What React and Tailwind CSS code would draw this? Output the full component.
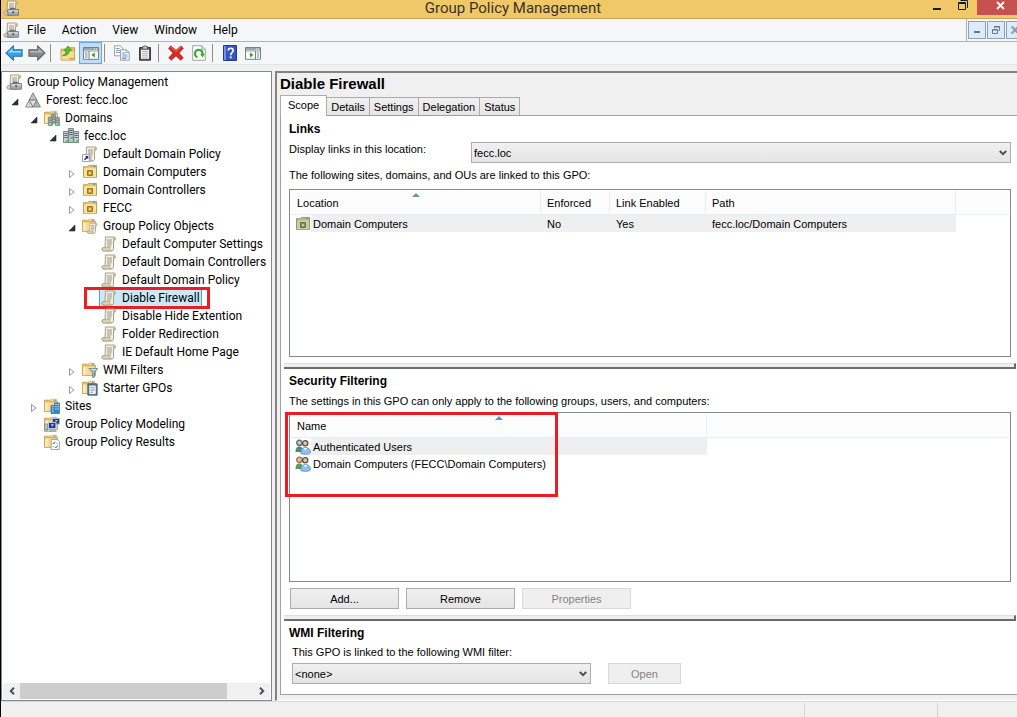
import {useState} from 'react'

const tree = [
	{ id: 'root', depth: 0, label: 'Group Policy Management', icon: ConsoleIcon },
	{ id: 'forest', depth: 1, label: 'Forest: fecc.loc', icon: ForestIcon, toggle: 'open' },
	{ id: 'domains', depth: 2, label: 'Domains', icon: DomainsIcon, toggle: 'open' },
	{ id: 'fecc', depth: 3, label: 'fecc.loc', icon: DomainIcon, toggle: 'open' },
	{ id: 'link', depth: 4, label: 'Default Domain Policy', icon: PolicyLinkIcon },
	{ id: 'ou1', depth: 4, label: 'Domain Computers', icon: OuIcon, toggle: 'closed' },
	{ id: 'ou2', depth: 4, label: 'Domain Controllers', icon: OuIcon, toggle: 'closed' },
	{ id: 'ou3', depth: 4, label: 'FECC', icon: OuIcon, toggle: 'closed' },
	{ id: 'gpos', depth: 4, label: 'Group Policy Objects', icon: GpoFolderIcon, toggle: 'open' },
	{ id: 'gpo1', depth: 5, label: 'Default Computer Settings', icon: PolicyIcon },
	{ id: 'gpo2', depth: 5, label: 'Default Domain Controllers', icon: PolicyIcon },
	{ id: 'gpo3', depth: 5, label: 'Default Domain Policy', icon: PolicyIcon },
	{ id: 'gpo4', depth: 5, label: 'Diable Firewall', icon: PolicyIcon, marked: true },
	{ id: 'gpo5', depth: 5, label: 'Disable Hide Extention', icon: PolicyIcon },
	{ id: 'gpo6', depth: 5, label: 'Folder Redirection', icon: PolicyIcon },
	{ id: 'gpo7', depth: 5, label: 'IE Default Home Page', icon: PolicyIcon },
	{ id: 'wmi', depth: 4, label: 'WMI Filters', icon: WmiFolderIcon, toggle: 'closed' },
	{ id: 'starter', depth: 4, label: 'Starter GPOs', icon: StarterFolderIcon, toggle: 'closed' },
	{ id: 'sites', depth: 2, label: 'Sites', icon: SitesIcon, toggle: 'closed' },
	{ id: 'modeling', depth: 2, label: 'Group Policy Modeling', icon: ModelingIcon },
	{ id: 'results', depth: 2, label: 'Group Policy Results', icon: ResultsIcon },
]

const indents = ['pl-[3px]', 'pl-[22px]', 'pl-[41px]', 'pl-[60px]', 'pl-[79px]', 'pl-[98px]']
const menus = ['File', 'Action', 'View', 'Window', 'Help']
const tabs = ['Scope', 'Details', 'Settings', 'Delegation', 'Status']

function classNames(...classes) {
	return classes.filter(Boolean).join(' ')
}

function Svg({ children, className = 'h-4 w-4' }) {
	return <svg viewBox="0 0 16 16" className={classNames('block shrink-0', className)} aria-hidden="true">{children}</svg>
}

function Scroll() {
	return <>
		<path d="M4.5 1H13c1.8 0 2 2.4.8 3.4l-1.3.2v8.2c0 1.6-.9 2.2-2.3 2.2H2.3C.6 15 .4 12 2.2 11.6H4z" fill="#f6f1de" stroke="#9c9684" strokeWidth=".9" />
		<path d="M2.2 11.6h7c-.8 1 .2 2.9 1.2 3.3H2.3C.8 14.8.6 12 2.2 11.6z" fill="#dcd2ae" stroke="#9c9684" strokeWidth=".6" />
		<path d="M12.4 1.4c-.8.8-.5 2.3 0 3.1h1.3c1-1 .8-2.8-.7-3.2z" fill="#c5b98f" />
		<path d="M6 4h5M6 6h5M6 8h5M6 10h4" stroke="#8d8c88" strokeWidth=".9" />
	</>
}

function Folder() {
	return <>
		<path d="M.5 2.2h4.6l1 1.3h7.4v10H.5z" fill="#e5c063" stroke="#c49c42" strokeWidth=".8" />
		<path d="M6.5 1.2h6v2h-6z" fill="#f7e7ad" stroke="#cba952" strokeWidth=".6" />
		<path d="M9.5 1.7h2.6v1H9.5z" fill="#4f9fd8" />
		<path d="M1 4.5h12v8.6H1z" fill="#f4dc96" />
		<path d="M1.4 4.8h2v8h-2z" fill="#fbefc4" />
	</>
}

function Server({ x, y }) {
	return <g transform={`translate(${x} ${y})`}>
		<path d="M.4.4h4v8.2h-4z" fill="#b9c3ca" stroke="#62707a" strokeWidth=".7" />
		<path d="M1 2h3M1 3.7h3M1 5.4h3" stroke="#54636e" strokeWidth=".7" />
		<path d="M2.5 6.8h1.8v1.6H2.5z" fill="#46cf2c" />
	</g>
}

function ConsoleIcon() {
	return <Svg>
		<Scroll />
		<path d="M7.5 9.5V8.3h4v1.2" fill="none" stroke="#4d5358" />
		<path d="M4.8 9.6h10.6v5.6H4.8z" fill="#a9b0b5" stroke="#5f676d" strokeWidth=".8" />
		<path d="M5.3 10.2h9.7v1.6H5.3z" fill="#d4d9dc" />
		<path d="M9.2 11.2h2v2h-2z" fill="#4b5c77" />
	</Svg>
}

function PolicyIcon() {
	return <Svg><Scroll /></Svg>
}

function PolicyLinkIcon() {
	return <Svg>
		<Scroll />
		<path d="M.5 8.5h7v7h-7z" fill="#fff" stroke="#8a8fa5" strokeWidth=".8" />
		<path d="M3 10h3.3v3.3L5.2 12.2l-2.2 2-1-1 2.2-2z" fill="#24246e" />
	</Svg>
}

function ForestIcon() {
	return <Svg>
		<path d="M8 .8 11.8 8H4.2z" fill="#cfcfcf" stroke="#777" strokeWidth=".9" />
		<path d="M4.2 8 8 15H.6z" fill="#f0f0f0" stroke="#777" strokeWidth=".9" />
		<path d="M11.8 8 15.4 15H8z" fill="#bdbdbd" stroke="#777" strokeWidth=".9" />
		<path d="M4.2 8h7.6L8 15z" fill="#e0e0e0" stroke="#777" strokeWidth=".9" />
		<path d="M8 1.5V8M4.2 8.5V14M11.8 8.5V14" stroke="#999" strokeWidth=".7" />
	</Svg>
}

function DomainsIcon() {
	return <Svg>
		<Folder />
		<Server x={7} y={4} />
		<Server x={4} y={7} />
		<Server x={11} y={7} />
	</Svg>
}

function DomainIcon() {
	return <Svg>
		<path d="M5.4.5h5v14h-5z" fill="#b9c3ca" stroke="#62707a" strokeWidth=".8" />
		<path d="M.5 3.5h4.6v11H.5zM10.8 3.5h4.7v11h-4.7z" fill="#cfd6db" stroke="#62707a" strokeWidth=".8" />
		<path d="M6.2 2.5h3.4M6.2 4.5h3.4M6.2 6.5h3.4M1.2 5.5h3.2M1.2 7.5h3.2M1.2 9.5h3.2M11.6 5.5h3.2M11.6 7.5h3.2M11.6 9.5h3.2" stroke="#4a5a66" strokeWidth=".9" />
		<path d="M7.6 9h2.2v2H7.6zM2.6 12.2h2.2v2H2.6zM13 12.2h2.2v2H13z" fill="#46cf2c" />
	</Svg>
}

function OuIcon() {
	return <Svg>
		<path d="M1.5 2.7h4l1.2-1.3h7.8v12H1.5z" fill="#e8c668" stroke="#bf9940" strokeWidth=".9" />
		<path d="M2 4.2h12v9H2z" fill="#f6e2a2" />
		<path d="M10.8 1.7h2.8v1.1h-2.8z" fill="#3e9be0" />
		<path d="M5.5 6.5h5v5h-5z" fill="#c9992c" stroke="#94701b" strokeWidth=".9" />
		<path d="M7 8.2h1.8V10H7z" fill="#f7e6ae" />
	</Svg>
}

function GreenOuIcon() {
	return <Svg>
		<path d="M1.5 2.7h4l1.2-1.3h7.8v12H1.5z" fill="#b3b987" stroke="#898e67" strokeWidth=".9" />
		<path d="M2 4.2h12v9H2z" fill="#c8cea6" />
		<path d="M10.8 1.7h2.8v1.1h-2.8z" fill="#579bc2" />
		<path d="M5.5 6.5h5v5h-5z" fill="#858c61" stroke="#656b48" strokeWidth=".9" />
		<path d="M7 8.2h1.8V10H7z" fill="#d8ddc0" />
	</Svg>
}

function GpoFolderIcon() {
	return <Svg>
		<Folder />
		<g transform="translate(4.6 4.6) scale(.72)"><Scroll /></g>
	</Svg>
}

function WmiFolderIcon() {
	return <Svg>
		<Folder />
		<path d="M7 6.5h8.6L12.6 10.5v4.3l-2 .8v-5.1z" fill="#a9bccb" stroke="#5a7287" strokeWidth=".8" />
		<path d="M8.4 7.3h5.8" stroke="#e6eef4" strokeWidth=".8" />
	</Svg>
}

function StarterFolderIcon() {
	return <Svg>
		<Folder />
		<path d="M5.8 3.8h9.4v11.4H5.8z" fill="#59768f" stroke="#38536b" strokeWidth=".7" />
		<path d="M7.3 5.6h6.4v8.3H7.3z" fill="#fff" />
		<path d="M8.3 7.3h4.4M8.3 9h4.4M8.3 10.7h4.4M8.3 12.3h3" stroke="#7e8f9e" strokeWidth=".8" />
	</Svg>
}

function SitesIcon() {
	return <Svg>
		<Folder />
		<path d="M7 7.5h3.5V5h5v10.5H7z" fill="#2b87c8" stroke="#1d6299" strokeWidth=".6" />
		<path d="M8 8.8h1.6M8 11h1.6M8 13.2h1.6M11.3 6.5h1.4M13.5 6.5h1.4M11.3 8.8h1.4M13.5 8.8h1.4M11.3 11h1.4M13.5 11h1.4" stroke="#d4ecfb" strokeWidth="1.1" />
	</Svg>
}

function ModelingIcon() {
	return <Svg>
		<Folder />
		<path d="M.6 8h3v7.3h-3z" fill="#bfc5ca" stroke="#727a82" strokeWidth=".7" />
		<path d="M1.3 12.6h1.5v1.5H1.3z" fill="#3fc72b" />
		<path d="M8.5 2.5h7v5.6h-7z" fill="#1e3da8" stroke="#aeb6c2" />
		<path d="M11 4h3l-2 2.6z" fill="#8cb7f0" />
		<path d="M4.5 6.5h7.4v6H4.5z" fill="#1a36a0" stroke="#c2c8d2" />
		<path d="M7 8h3l-2 3.2z" fill="#9cc2f5" />
		<path d="M5.5 14.5h6l1 1h-8z" fill="#c5c9cf" stroke="#7f868f" strokeWidth=".6" />
	</Svg>
}

function ResultsIcon() {
	return <Svg>
		<Folder />
		<path d="M7.2 5.5h6l2.2 2v8H7.2z" fill="#fff" stroke="#8b949d" strokeWidth=".8" />
		<path d="M8.6 9l1 1 1.6-2.2M10.8 13l1 1 2-2.6" fill="none" stroke="#2c67ae" />
		<path d="M12.2 9.3h2M8.4 12.5h1.6" stroke="#98a2ac" strokeWidth=".8" />
	</Svg>
}

function GroupIcon({ hair, coat }) {
	return <Svg>
		<circle cx="4.4" cy="3.8" r="2.7" fill="#dcc3a6" stroke={hair} strokeWidth="1.3" />
		<path d="M.6 13c-.2-3.6 1.2-5.4 3.7-5.4 2.4 0 3.4 1.6 3.6 5.4z" fill={coat} />
		<circle cx="10.2" cy="4.2" r="2.6" fill="#e3c6a4" stroke="#5b5048" strokeWidth="1.3" />
		<path d="M5.9 14.5c-.2-4.3 1.5-6 4.4-6 3.1 0 5 1.7 5.2 4.6 0 1.7-1.7 2.2-4 2.2-2.1 0-4.6 0-5.6-.8z" fill="#8fc0ec" stroke="#4a7fb5" strokeWidth=".7" />
		<path d="M8.5 9l2 2.5 1.6-2.5z" fill="#fff" />
	</Svg>
}

function BackIcon() {
	return <Svg className="h-[18px] w-[18px]">
		<path d="M.8 8 7.4 1.8v3.4h7.8v5.6H7.4v3.4z" fill="#3ba3e2" stroke="#1a6fae" strokeWidth=".9" />
		<path d="M2.4 7.6 6.6 3.8v2.4h7.8v1.4z" fill="#98dbf8" />
	</Svg>
}

function ForwardIcon() {
	return <Svg className="h-[18px] w-[18px]">
		<path d="M15.2 8 8.6 1.8v3.4H.8v5.6h7.8v3.4z" fill="#8a8a8a" stroke="#5f5f5f" strokeWidth=".9" />
		<path d="M13.6 7.6 9.4 3.8v2.4H1.6v1.4z" fill="#b9b9b9" />
	</Svg>
}

function UpFolderIcon() {
	return <Svg>
		<path d="M1 4.2h5l1-1.5h7.5v12.4H1z" fill="#e6c46b" stroke="#b8923c" strokeWidth=".8" />
		<path d="M1.5 6.5h12.6v8.2H1.5z" fill="#f5dc94" />
		<path d="M9 13h5v1.5H9z" fill="#cfaa4d" />
		<path d="M2.5 10.6C5 9.6 6 8 6 5.4H4L8 1l3.6 4.4H9.4c0 3.4-2.6 5.6-6.9 5.2z" fill="#50c227" stroke="#2e8a14" strokeWidth=".6" />
	</Svg>
}

function PaneIcon({ flip }) {
	return <Svg>
		<path d="M.5 2.5h15v11.8H.5z" fill="#fcfcfc" stroke="#76808a" />
		<path d="M1 3h14v2.2H1z" fill="#9ba5af" />
		<path d="M11 4h1M13 4h1" stroke="#fff" />
		<path d="M1 6h14" stroke="#76808a" strokeWidth=".7" />
		{flip
			? <><path d="M10.5 6v8" stroke="#76808a" /><path d="M12 8h2M12 10h2M12 12h2" stroke="#76808a" /><path d="M5 7.4v5L8.4 10z" fill="#3d9d1f" /></>
			: <><path d="M6 6v8" stroke="#76808a" /><path d="M2 8h2.5M2 10h2.5M2 12h2.5" stroke="#76808a" /><path d="M11.8 7.4v5L8.4 10z" fill="#3d9d1f" /></>}
	</Svg>
}

function CopyIcon() {
	return <Svg>
		<path d="M.6.8h5.6l2.6 2.4v7.6H.6z" fill="#fff" stroke="#8b9299" strokeWidth=".9" />
		<path d="M2 3.5h3.5M2 5.5h4M2 7.5h4" stroke="#6f93ba" strokeWidth=".9" />
		<path d="M6.6 4.8h5.6l3 2.6v7.8H6.6z" fill="#fff" stroke="#8b9299" strokeWidth=".9" />
		<path d="M12 5v2.6h3" fill="none" stroke="#8b9299" strokeWidth=".8" />
		<path d="M8.2 8h3M8.2 10h5.3M8.2 12h5.3M8.2 13.6h4" stroke="#4c83c0" strokeWidth=".9" />
	</Svg>
}

function ClipboardIcon() {
	return <Svg>
		<path d="M2.5 2.5h11v12.7h-11z" fill="#555" stroke="#3c3c3c" />
		<path d="M4 4.6h8v9.2H4z" fill="#f5f5f5" />
		<path d="M5 6.4h6M5 8.3h6M5 10.2h6M5 12.1h6" stroke="#a5a5a5" strokeWidth=".8" />
		<path d="M5.5 1.6h1.4c.3-1.2 1.9-1.2 2.2 0h1.4v2.6h-5z" fill="#c4c4c4" stroke="#4b4b4b" strokeWidth=".8" />
	</Svg>
}

function DeleteIcon() {
	return <Svg>
		<path d="M2.6.8 8 5.2 13 .9l2.4 2.3L10.9 8l4.3 4.8-2.6 2.4L8 10.8l-4.8 4.5L.8 12.8 5.1 8 .7 3.5z" fill="#da2a22" stroke="#a91410" strokeWidth=".7" />
		<path d="M2.6 1.8 8 6.3l5-4.3" fill="none" stroke="#f47b70" strokeWidth=".9" />
	</Svg>
}

function RefreshIcon() {
	return <Svg>
		<path d="M1.7.7h9l3.6 3.3v11.3H1.7z" fill="#fdfdfd" stroke="#9a9a9a" strokeWidth=".9" />
		<path d="M10.6.9v3.3h3.4" fill="#e6e6e6" stroke="#9a9a9a" strokeWidth=".8" />
		<path d="M6.4 12.2A3.8 3.8 0 1 1 11.6 9" fill="none" stroke="#38a82b" strokeWidth="2" />
		<path d="M9 8.8h4.8l-2.2 3.7z" fill="#38a82b" />
	</Svg>
}

function HelpIcon() {
	return <Svg>
		<path d="M1.5.5h13v15h-13z" fill="#3456c4" stroke="#223a8c" />
		<path d="M2 1h1.8v14H2z" fill="#7f97e2" />
		<path d="M6.2 5.6c0-3.2 5-3.2 5 0 0 2-2.5 2-2.5 4.6" fill="none" stroke="#fff" strokeWidth="1.6" />
		<path d="M7.8 11.4h1.8v1.8H7.8z" fill="#fff" />
	</Svg>
}

function Chevron({ className }) {
	return <svg viewBox="0 0 8 8" className={classNames('h-2 w-2', className)} aria-hidden="true">
		<path d="M.8 2 4 5.2 7.2 2" fill="none" stroke="#505050" strokeWidth="2" />
	</svg>
}

function TitleBar() {
	return <header className="grid h-[19px] shrink-0 grid-cols-[1fr_auto_1fr] items-start border-b border-[#c8a65b] bg-[#f0c869]">
		<div className="pl-0.5"><ConsoleIcon /></div>
		<h1 className="pl-2 text-[15px] leading-4 text-[#3a3226]">Group Policy Management</h1>
		<div className="flex justify-end">
			<button type="button" aria-label="Minimize" className="flex h-[15px] w-[26px] items-center justify-center">
				<svg viewBox="0 0 10 10" className="h-2.5 w-2.5"><path d="M1 5h8v2H1z" fill="#1c1c1c" /></svg>
			</button>
			<button type="button" aria-label="Restore" className="flex h-[15px] w-[26px] justify-center">
				<svg viewBox="0 0 11 11" className="h-[11px] w-[11px]">
					<path d="M.5 2.5h7v7h-7zM.5 3.5h7M2.5.5h7V8" fill="none" stroke="#1c1c1c" />
				</svg>
			</button>
			<button type="button" aria-label="Close" className="ml-px flex h-[15px] w-10 justify-center bg-[#c75050] pl-1.5 pt-px">
				<svg viewBox="0 0 9 9" className="h-[9px] w-[9px]"><path d="M1 1l7 7M8 1 1 8" stroke="#fff" strokeWidth="1.8" /></svg>
			</button>
		</div>
	</header>
}

function MdiButton({ label, children }) {
	return <button type="button" aria-label={label} className="flex h-[18px] w-[18px] shrink-0 items-center justify-center border border-[#8ea3b8] bg-[#dcebfa]">
		<svg viewBox="0 0 10 10" className="h-2.5 w-2.5 shrink-0">{children}</svg>
	</button>
}

function MenuBar() {
	return <div className="flex h-[23px] shrink-0 border-b border-[#b0b3b6]">
		<nav className="flex grow items-center border-r border-[#b0b3b6] pl-0.5">
			<ConsoleIcon />
			{menus.map((menu) => (
				<button key={menu} type="button" className="px-2 leading-4">{menu}</button>
			))}
		</nav>
		<div className="flex w-[50px] shrink-0 gap-px overflow-hidden pl-px pt-0.5">
			<MdiButton label="Minimize window"><path d="M2 6h6v2H2z" fill="#66788a" /></MdiButton>
			<MdiButton label="Restore window">
				<path d="M1.5 4.5h5v4h-5zM1.5 5h5M3.5 3V1.5h5v4H7.5M3.5 2h5" fill="none" stroke="#66788a" />
			</MdiButton>
			<MdiButton label="Close window"><path d="M1.5 1.5l7 7M8.5 1.5l-7 7" stroke="#8c9cab" strokeWidth="2" /></MdiButton>
		</div>
	</div>
}

function Tool({ label, active, children }) {
	return <button
		type="button"
		aria-label={label}
		className={classNames(
			'flex h-[22px] w-[23px] items-center justify-center',
			active && 'border border-[#66a7e8] bg-[#c0dcf6]'
		)}
	>
		{children}
	</button>
}

function Separator() {
	return <span className="ml-0.5 mr-[5px] h-[18px] w-px bg-[#8d8d8d]" />
}

function Toolbar() {
	return <div className="flex h-[23px] shrink-0 items-center border-b border-[#e4e4e6] pl-px">
		<Tool label="Back"><BackIcon /></Tool>
		<Tool label="Forward"><ForwardIcon /></Tool>
		<Separator />
		<Tool label="Up one level"><UpFolderIcon /></Tool>
		<Tool label="Show console tree" active><PaneIcon /></Tool>
		<Separator />
		<Tool label="Copy"><CopyIcon /></Tool>
		<Tool label="Paste"><ClipboardIcon /></Tool>
		<Separator />
		<Tool label="Delete"><DeleteIcon /></Tool>
		<Tool label="Refresh"><RefreshIcon /></Tool>
		<Separator />
		<Tool label="Help"><HelpIcon /></Tool>
		<Tool label="Show action pane"><PaneIcon flip /></Tool>
	</div>
}

function TreeRow({ node, selected, onSelect }) {
	const Icon = node.icon
	return <li role="treeitem" aria-selected={selected} className={classNames('relative flex h-[18px] items-center', indents[node.depth])}>
		{node.toggle && (
			<span className="-ml-3.5 flex w-3.5 shrink-0 pt-1">
				<svg viewBox="0 0 8 8" className="h-2 w-2" aria-hidden="true">
					{node.toggle === 'open'
						? <path d="M7 1v6H1z" fill="#303030" stroke="#303030" strokeWidth=".6" />
						: <path d="M1.5.5v7L6 4z" fill="#fff" stroke="#9a9a9a" />}
				</svg>
			</span>
		)}
		<button
			type="button"
			onClick={() => onSelect(node.id)}
			className={classNames(
				'-ml-0.5 flex h-[18px] items-center gap-[5px] whitespace-nowrap border px-px',
				selected ? 'border-[#4da3cf] bg-[#cbe8f6]' : 'border-transparent'
			)}
		>
			<Icon />
			{node.label}
		</button>
		{node.marked && <span className="pointer-events-none absolute -inset-y-0.5 left-[81px] w-[126px] border-3 border-[#ed1c24]" />}
	</li>
}

function TreePane() {
	const [selected, setSelected] = useState('gpo4')
	return <aside className="flex w-[271px] shrink-0 flex-col border border-[#828790] bg-white p-px">
		<ul role="tree" aria-label="Console tree" className="grow overflow-hidden">
			{tree.map((node) => (
				<TreeRow key={node.id} node={node} selected={selected === node.id} onSelect={setSelected} />
			))}
		</ul>
		<div className="flex h-4 shrink-0 bg-[#f0f0f0]">
			<button type="button" aria-label="Scroll left" className="flex w-[17px] items-center justify-center"><Chevron className="rotate-90" /></button>
			<div className="grow"><div className="h-full w-[89%] bg-[#cdcdcd]" /></div>
			<button type="button" aria-label="Scroll right" className="flex w-[17px] items-center justify-center"><Chevron className="-rotate-90" /></button>
		</div>
	</aside>
}

function Select({ id, value, className }) {
	return <div className={classNames('relative', className)}>
		<select id={id} defaultValue={value} className="block h-[21px] w-full appearance-none border border-[#acacac] bg-linear-to-b from-[#f0f0f0] to-[#e4e4e4] pl-0.5">
			<option>{value}</option>
		</select>
		<Chevron className="pointer-events-none absolute right-1 top-[7px]" />
	</div>
}

function Button({ children, className, disabled }) {
	return <button
		type="button"
		disabled={disabled}
		className={classNames(
			'h-[21px] border',
			disabled ? 'border-[#d9d9d9] bg-[#efefef] text-[#838383]' : 'border-[#acacac] bg-linear-to-b from-[#f0f0f0] to-[#e5e5e5]',
			className
		)}
	>
		{children}
	</button>
}

function HeaderCell({ children, className, sorted }) {
	return <th className={classNames('relative border-b border-r border-[#e3eefb] pl-1.5 text-left font-normal', className)}>
		{sorted && (
			<svg viewBox="0 0 8 4" className="absolute left-1/2 top-0.5 -ml-1 h-1 w-2" aria-hidden="true">
				<path d="M4 0l4 4H0z" fill="#5c98b8" />
			</svg>
		)}
		{children}
	</th>
}

function SectionTitle({ children }) {
	return <h3 className="text-xs font-bold leading-[14px]">{children}</h3>
}

function Splitter() {
	return <div className="ml-[3px] mr-px h-1.5 shrink-0 border-b-2 border-r-2 border-t border-b-[#6b6b6b] border-r-[#6b6b6b] border-t-[#dedede] bg-[#efefef]" />
}

function Scope() {
	return <div className="flex grow flex-col border-y border-l border-[#a0a0a0] bg-white text-[11px] leading-[14px]">
		<section className="flex grow basis-0 flex-col pb-1.5 pl-2 pr-1.5 pt-1.5">
			<SectionTitle>Links</SectionTitle>
			<div className="mt-1 flex items-start">
				<label htmlFor="location" className="w-[182px] pt-0.5">Display links in this location:</label>
				<Select id="location" value="fecc.loc" className="mt-0.5 grow" />
			</div>
			<p className="mt-[5px]">The following sites, domains, and OUs are linked to this GPO:</p>
			<div className="mt-[7px] grow border border-[#828790] p-px">
				<table className="w-full table-fixed border-separate border-spacing-0">
					<thead>
						<tr className="h-6 bg-[#fcfcfc]">
							<HeaderCell className="w-[250px]" sorted>Location</HeaderCell>
							<HeaderCell className="w-[69px]">Enforced</HeaderCell>
							<HeaderCell className="w-24">Link Enabled</HeaderCell>
							<HeaderCell className="w-[250px]">Path</HeaderCell>
							<td className="border-b border-[#e3eefb]" />
						</tr>
					</thead>
					<tbody>
						<tr className="h-[17px]">
							<td className="bg-linear-to-r from-white from-[20px] to-[#efefef] to-[20px]">
								<div className="flex items-center gap-0.5 pl-1"><GreenOuIcon />Domain Computers</div>
							</td>
							<td className="bg-[#efefef] pl-1.5">No</td>
							<td className="bg-[#efefef] pl-1.5">Yes</td>
							<td className="bg-[#efefef] pl-1.5">fecc.loc/Domain Computers</td>
							<td />
						</tr>
					</tbody>
				</table>
			</div>
		</section>
		<Splitter />
		<section className="flex grow basis-0 flex-col pb-1.5 pl-2 pr-1.5 pt-[5px]">
			<SectionTitle>Security Filtering</SectionTitle>
			<p className="mt-1.5">The settings in this GPO can only apply to the following groups, users, and computers:</p>
			<div className="relative mt-1 grow border border-[#828790] p-px">
				<table className="w-full table-fixed border-separate border-spacing-0">
					<thead>
						<tr className="h-6 bg-[#fcfcfc]">
							<HeaderCell className="w-[416px]" sorted>Name</HeaderCell>
							<td className="border-b border-[#e3eefb]" />
						</tr>
					</thead>
					<tbody>
						<tr className="h-[17px]">
							<td className="bg-linear-to-r from-white from-[20px] to-[#efefef] to-[20px]">
								<div className="flex items-center gap-0.5 pl-1"><GroupIcon hair="#4f6d63" coat="#4d8c72" />Authenticated Users</div>
							</td>
							<td />
						</tr>
						<tr className="h-[17px]">
							<td>
								<div className="flex items-center gap-0.5 pl-1"><GroupIcon hair="#a0713c" coat="#5c9a5a" />Domain Computers (FECC\Domain Computers)</div>
							</td>
							<td />
						</tr>
					</tbody>
				</table>
				<span className="pointer-events-none absolute -left-[5px] -top-px h-[85px] w-[273px] border-3 border-[#ed1c24]" />
			</div>
			<div className="mt-1.5 flex gap-[7px] pl-px">
				<Button className="w-[109px]">Add...</Button>
				<Button className="w-[109px]">Remove</Button>
				<Button className="w-[109px]" disabled>Properties</Button>
			</div>
		</section>
		<Splitter />
		<section className="pb-2.5 pl-2 pt-[5px]">
			<SectionTitle>WMI Filtering</SectionTitle>
			<div className="pl-[3px]">
				<label htmlFor="wmi" className="mt-[5px] block">This GPO is linked to the following WMI filter:</label>
				<div className="mt-1 flex gap-[17px]">
					<Select id="wmi" value="<none>" className="w-[299px]" />
					<Button className="w-[73px]" disabled>Open</Button>
				</div>
			</div>
		</section>
	</div>
}

function DetailPane() {
	return <main className="ml-[3px] flex min-w-0 grow flex-col border-b border-l-2 border-t-2 border-b-white border-l-[#828282] border-t-[#828282] bg-[#f0f0f0] pb-[5px] pl-[3px] font-['Liberation_Sans',Arial,sans-serif]">
		<h2 className="pt-0.5 text-[15px] font-bold leading-[18px]">Diable Firewall</h2>
		<div role="tablist" className="flex items-end pt-0.5 text-[11px] leading-[14px]">
			{tabs.map((tab, i) => (
				<button
					key={tab}
					type="button"
					role="tab"
					aria-selected={i === 0}
					className={classNames(
						'border-[#acacac]',
						i === 0
							? 'relative -mb-px h-[21px] border-x border-t bg-white px-[7px] pb-0.5'
							: 'h-[18px] border-r border-t bg-linear-to-b from-[#f0f0f0] to-[#e5e5e5] px-1'
					)}
				>
					{tab}
				</button>
			))}
		</div>
		<Scope />
	</main>
}

export default function App() {
	return (
		<div className="flex h-screen min-h-[600px] flex-col overflow-hidden border-l border-black bg-[#f5f6f8] font-[Roboto,'Segoe_UI',sans-serif] text-xs text-black">
			<TitleBar />
			<MenuBar />
			<Toolbar />
			<div className="flex min-h-0 grow bg-[#f0f0f0] pt-1.5">
				<TreePane />
				<DetailPane />
			</div>
			<footer className="flex h-4 shrink-0 justify-end border-t border-[#d7d7d7] bg-[#f0f0f0] pt-px">
				<div className="w-[133px] border-l border-[#d7d7d7]" />
				<div className="w-20 border-l border-[#d7d7d7]" />
			</footer>
		</div>
	)
}
